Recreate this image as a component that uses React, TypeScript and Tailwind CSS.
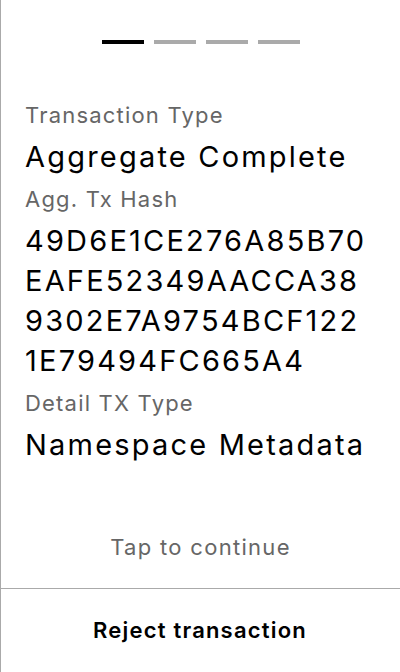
import React from 'react';

const hashLines = ['49D6E1CE276A85B70', 'EAFE52349AACCA38', '9302E7A9754BCF122', '1E79494FC665A4'];

const Label: React.FC<{ children: React.ReactNode; className?: string }> = ({ children, className = '' }) => (
  <div className={`text-[22px] leading-[30px] tracking-[1.2px] text-[#666666] ${className}`}>{children}</div>
);

const Value: React.FC<{ children: React.ReactNode; className?: string }> = ({ children, className = '' }) => (
  <div className={`text-[29px] leading-[40px] tracking-[2.2px] text-black ${className}`}>{children}</div>
);

export default function App() {
  const steps = [true, false, false, false];

  return (
    <div
      className="min-h-[672px] h-[672px] w-[400px] flex flex-col bg-white border-l border-[#aaaaaa]"
      style={{ fontFamily: 'Inter, "Noto Sans", sans-serif' }}
    >
      <div className="flex-1 flex flex-col">
        <div className="pt-10 flex justify-center gap-2.5">
          {steps.map((active, i) => (
            <div key={i} className={`w-[42px] h-1 ${active ? 'bg-black' : 'bg-[#aaaaaa]'}`} />
          ))}
        </div>

        <div className="mt-[56px] pl-6 pr-2">
          <Label>Transaction Type</Label>
          <Value className="mt-[7px]">Aggregate Complete</Value>
          <Label className="mt-[7px]">Agg. Tx Hash</Label>
          <Value className="mt-[7px]">
            {hashLines.map(line => (
              <div key={line}>{line}</div>
            ))}
          </Value>
          <Label className="mt-[7px]">Detail TX Type</Label>
          <Value className="mt-[7px]">Namespace Metadata</Value>
        </div>

        <div className="mt-auto pb-[26px] text-center text-[22px] leading-[30px] tracking-[1.3px] text-[#666666]">
          Tap to continue
        </div>
      </div>

      <button className="h-[84px] border-t border-[#aaaaaa] -ml-px w-[400px] text-[22px] font-semibold tracking-[1.2px] text-black">
        Reject transaction
      </button>
    </div>
  );
}
